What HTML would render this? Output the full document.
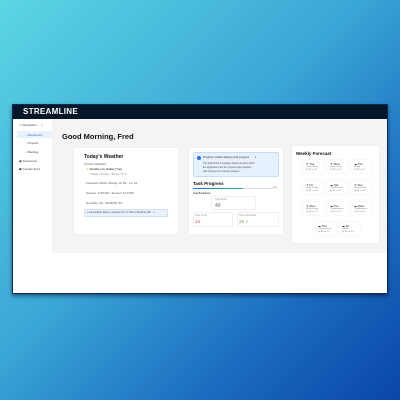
<!DOCTYPE html><html><head><style>
*{margin:0;padding:0;box-sizing:border-box}
body{width:400px;height:400px;overflow:hidden;background:linear-gradient(135deg,#5cd6e4 0%,#3aa6d6 45%,#1b6cc0 75%,#0a46a8 100%);font-family:"Liberation Sans",sans-serif;position:relative}
.win{position:absolute;left:12px;top:104px;width:376px;height:190px;background:#fff;box-shadow:0 2px 4px rgba(0,0,40,.5);border:1px solid #0b2a55}
.hdr{position:absolute;left:0;top:0;width:100%;height:14px;background:#051629;color:#fff;font-weight:900;font-size:8px;line-height:14px;padding-left:10px;letter-spacing:.3px}
.side{position:absolute;left:0;top:14px;width:39px;height:134px;font-size:3px;color:#445}
.side div{position:absolute;left:4px}
.main{position:absolute;left:39px;top:14px;right:0;height:134px;background:#f4f4f4}
.card{position:absolute;background:#fff;border-radius:2px;box-shadow:0 0 1px rgba(0,0,0,.1)}
.t{position:absolute;font-size:3px;color:#555;white-space:nowrap}
.b{font-weight:bold;color:#111}
.fc{position:absolute;width:21px;height:13px;background:#fff;box-shadow:0 0 1px rgba(0,0,0,.2);border-radius:1px}
.fc span{position:absolute;font-size:2px;color:#777;left:3px;white-space:nowrap}
</style></head><body>
<div class="win">
<div class="hdr">STREAMLINE</div>
<div class="side">
<div style="top:4px;left:6px">☐ Streamline &nbsp;&nbsp;&nbsp;&nbsp;˅</div>
<div style="top:12px;left:4px;width:36px;height:7px;background:#eaf2fc"></div>
<div style="top:14px;left:12px;color:#3a6fd0">◌ Dashboard</div>
<div style="top:22px;left:12px">◌ Projects</div>
<div style="top:31px;left:12px">◌ Backlog</div>
<div style="top:40px;left:6px">▣ Resources</div>
<div style="top:48px;left:6px">☗ Contact Fred</div>
</div>
<div class="main">
<div class="t b" style="left:10px;top:13px;font-size:7.5px;font-weight:900">Good Morning, Fred</div>
<div class="card" style="left:22px;top:29px;width:104px;height:86px">
<div class="t b" style="left:10px;top:6px;font-size:5px">Today's Weather</div>
<div class="t" style="left:10px;top:14px">Current Weather:</div>
<div class="t" style="left:12px;top:19px;color:#222"><span style="color:#e8b400">☀</span> Weather for Dallas (Tue)</div>
<div class="t" style="left:17px;top:24px;color:#888">Partly Cloudy | Temp: 71°F</div>
<div class="t" style="left:12px;top:33px">Forecast: Partly Cloudy, Hi: 81 - Lo: 61</div>
<div class="t" style="left:12px;top:43px">Sunrise: 6:39 AM - Sunset: 8:10 PM</div>
<div class="t" style="left:12px;top:53px">Humidity: 60 - Wind(W): 62</div>
<div style="position:absolute;left:10px;top:61px;width:84px;height:8px;background:#e8f1fd;border:1px solid #cfe0f8;border-radius:1px"></div>
<div class="t" style="left:13px;top:63px;font-size:2.6px"><span style="color:#2a6ee0">●</span> All weather data is request from a Yahoo Weather API. &nbsp;×</div>
</div>
<div class="card" style="left:137px;top:29px;width:94px;height:86px">
<div style="position:absolute;left:4px;top:4px;width:86px;height:25px;background:#e6f1fd;border:1px solid #c8dcf5;border-radius:2px"></div>
<div style="position:absolute;left:8px;top:8px;width:4px;height:4px;border-radius:50%;background:#2a6ee0"></div>
<div class="t" style="left:14px;top:8px;font-size:2.6px;color:#333">Progress module displays task progress. &nbsp;&nbsp;&nbsp;&nbsp;&nbsp;&nbsp;×</div>
<div class="t" style="left:14px;top:14px;font-size:2.4px">The dashboard homepage shows all tasks within</div>
<div class="t" style="left:14px;top:18px;font-size:2.4px">the application and the projects page displays</div>
<div class="t" style="left:14px;top:22px;font-size:2.4px">task progress for selected projects.</div>
<div class="t b" style="left:4px;top:33px;font-size:4.5px">Task Progress</div>
<div style="position:absolute;left:4px;top:40px;width:80px;height:1px;background:#ddd"></div>
<div style="position:absolute;left:4px;top:40px;width:50px;height:1px;background:linear-gradient(90deg,#2a6ee0,#40b060)"></div>
<div class="t" style="left:84px;top:39px;font-size:2.2px">60%</div>
<div class="t" style="left:4px;top:44px;font-size:2.4px;color:#222">Task Breakdown</div>
<div style="position:absolute;left:22px;top:48px;width:45px;height:14px;border:1px solid #f0f0f0"></div>
<div class="t" style="left:26px;top:50px;font-size:2.4px;color:#999">Total Tasks</div>
<div class="t" style="left:26px;top:55px;font-size:5px;color:#666">40</div>
<div style="position:absolute;left:4px;top:64px;width:40px;height:15px;border:1px solid #f0f0f0"></div>
<div style="position:absolute;left:48px;top:64px;width:42px;height:15px;border:1px solid #f0f0f0"></div>
<div class="t" style="left:6px;top:66px;font-size:2.4px;color:#999">Task To Do</div>
<div class="t" style="left:6px;top:71px;font-size:4.5px;color:#d44">14</div>
<div class="t" style="left:50px;top:66px;font-size:2.4px;color:#999">Task Completed</div>
<div class="t" style="left:50px;top:71px;font-size:4.5px;color:#6a4">26 ✓</div>
</div>
<div class="card" style="left:240px;top:27px;width:87px;height:97px">
<div class="t b" style="left:4px;top:5px;font-size:4.5px">Weekly Forecast</div>
<div class="fc" style="left:11px;top:14px"><span style="top:2px;font-size:3px;color:#222">☀ Tue</span><span style="top:6px">Partly Cloudy</span><span style="top:9px">Hi: 81 Lo: 61</span></div>
<div class="fc" style="left:35px;top:14px"><span style="top:2px;font-size:3px;color:#222">☀ Wed</span><span style="top:6px">Partly Cloudy</span><span style="top:9px">Hi: 83 Lo: 63</span></div>
<div class="fc" style="left:59px;top:14px"><span style="top:2px;font-size:3px;color:#222">☁ Thu</span><span style="top:6px">Cloudy</span><span style="top:9px">Hi: 80 Lo: 71</span></div>
<div class="fc" style="left:11px;top:35px"><span style="top:2px;font-size:3px;color:#222">☀ Fri</span><span style="top:6px">Partly Cloudy</span><span style="top:9px">Hi: 83 Lo: 63</span></div>
<div class="fc" style="left:35px;top:35px"><span style="top:2px;font-size:3px;color:#222">☁ Sat</span><span style="top:6px">Thunderstorms</span><span style="top:9px">Hi: 86 Lo: 71</span></div>
<div class="fc" style="left:59px;top:35px"><span style="top:2px;font-size:3px;color:#222">☀ Sun</span><span style="top:6px">Partly Cloudy</span><span style="top:9px">Hi: 84 Lo: 66</span></div>
<div class="fc" style="left:11px;top:56px"><span style="top:2px;font-size:3px;color:#222">☀ Mon</span><span style="top:6px">Mostly Sunny</span><span style="top:9px">Hi: 86 Lo: 72</span></div>
<div class="fc" style="left:35px;top:56px"><span style="top:2px;font-size:3px;color:#222">☁ Tue</span><span style="top:6px">Thunderstorms</span><span style="top:9px">Hi: 86 Lo: 70</span></div>
<div class="fc" style="left:59px;top:56px"><span style="top:2px;font-size:3px;color:#222">☁ Wed</span><span style="top:6px">Thunderstorms</span><span style="top:9px">Hi: 86 Lo: 68</span></div>
<div class="fc" style="left:23px;top:76px"><span style="top:2px;font-size:3px;color:#222">☁ Thu</span><span style="top:6px">Thunderstorms</span><span style="top:9px">Hi: 86 Lo: 70</span></div>
<div class="fc" style="left:47px;top:76px"><span style="top:2px;font-size:3px;color:#222">☁ Fri</span><span style="top:6px">Cloudy</span><span style="top:9px">Hi: 86 Lo: 69</span></div>
</div>
</div>
</div>
</body></html>
